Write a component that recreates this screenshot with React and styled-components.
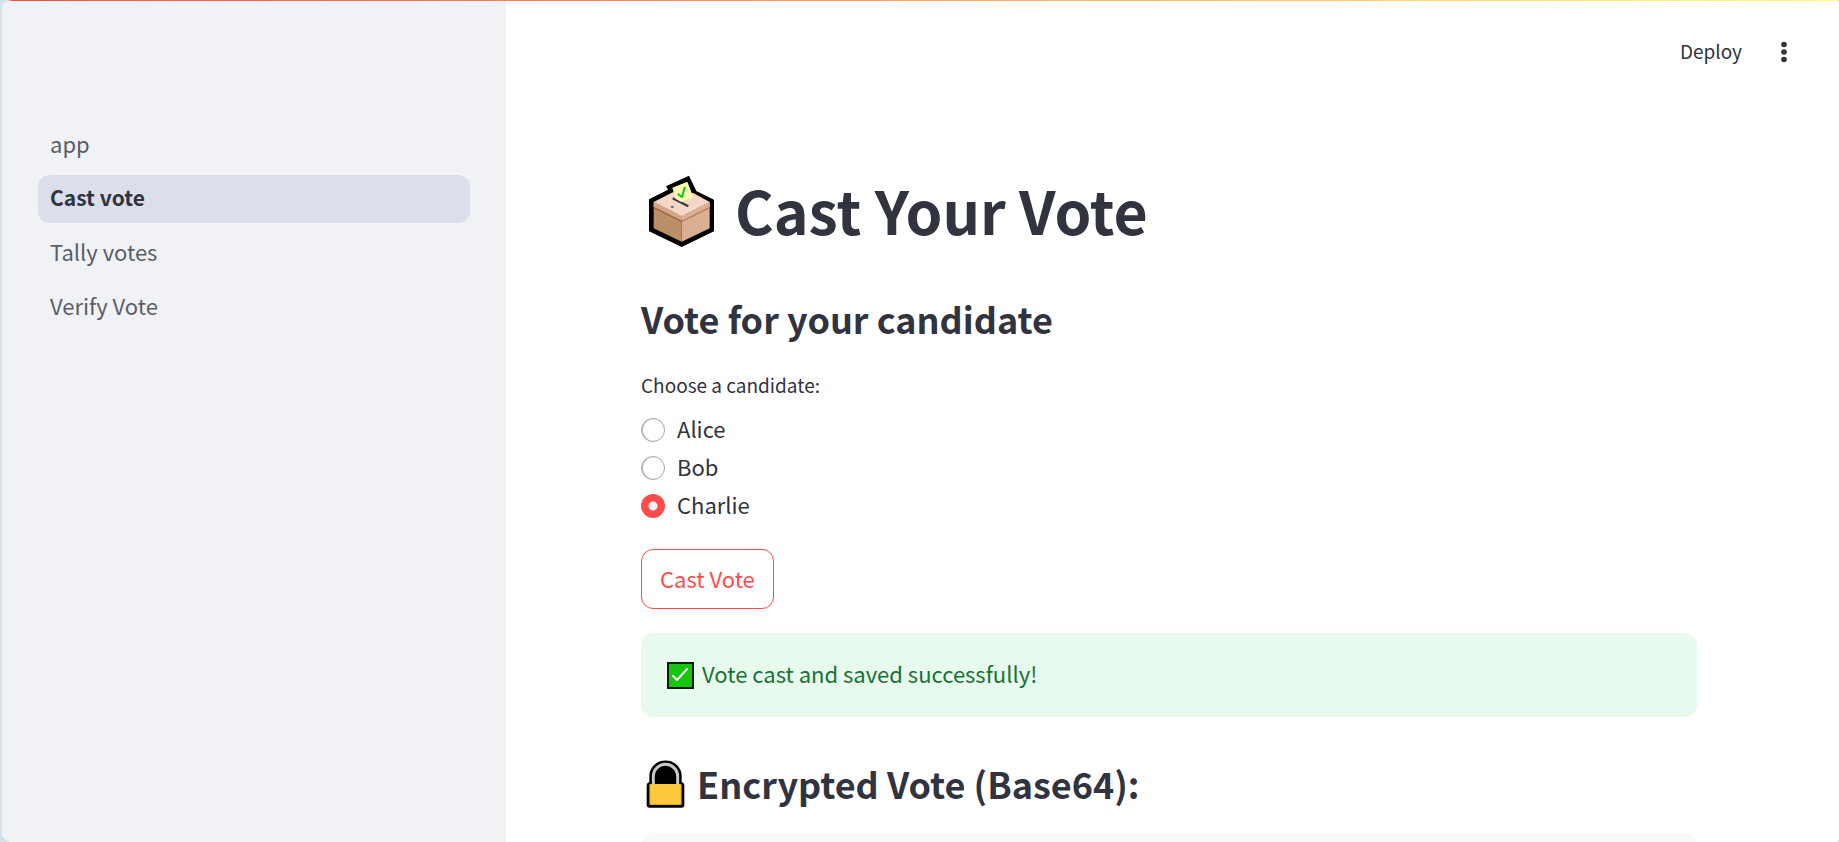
import React, { useState } from "react";
import styled, { createGlobalStyle } from "styled-components";

const GlobalStyle = createGlobalStyle`
  *, *::before, *::after { box-sizing: border-box; }
  body {
    margin: 0;
    background: #d5e1ea;
    color: #31333f;
    font-family: "Source Sans Pro", "Noto Sans CJK SC", "Noto Sans", sans-serif;
    font-size: 22px;
    line-height: 36px;
  }
  h1, h2, p { margin: 0; }
  button, input { font: inherit; color: inherit; }
`;

const Window = styled.div`
  display: flex;
  flex-direction: column;
  height: 100vh;
  margin-left: 2px;
  border-radius: 10px 4px 4px 10px;
  overflow: hidden;
  background: #fff;
`;

const Decoration = styled.div`
  flex: none;
  height: 1px;
  background: linear-gradient(90deg, #ff4b4b, #fffd80);
`;

const Body = styled.div`
  flex: 1;
  display: flex;
  min-height: 0;
`;

const Sidebar = styled.aside`
  flex: none;
  width: 504px;
  padding: 120px 36px 36px;
  background: #f0f2f6;
`;

const Nav = styled.nav`
  display: flex;
  flex-direction: column;
  gap: 6px;
`;

const NavLink = styled.a`
  padding: 4px 12px 8px;
  border-radius: 12px;
  text-decoration: none;
  color: ${(p) => (p.$active ? "#31333f" : "#5b5d68")};
  background: ${(p) => (p.$active ? "#dadfea" : "transparent")};
  font-size: ${(p) => (p.$active ? 21 : 22)}px;
  font-weight: ${(p) => (p.$active ? 600 : 400)};
`;

const Main = styled.main`
  flex: 1;
  min-width: 0;
  padding-right: 7px;
  overflow-y: auto;
  scrollbar-width: none;
`;

const Toolbar = styled.header`
  display: flex;
  justify-content: flex-end;
  align-items: center;
  gap: 24px;
  height: 102px;
  padding-right: 30px;
`;

const ToolButton = styled.button`
  display: flex;
  align-items: center;
  justify-content: center;
  padding: 0 0 2px;
  border: 0;
  background: none;
  font-size: 19px;
  line-height: 32px;
  cursor: pointer;
`;

const Content = styled.div`
  max-width: 1104px;
  margin: 0 auto;
  padding: 71px 24px 0;
`;

const Title = styled.h1`
  display: flex;
  align-items: flex-start;
  gap: 12px;
  height: 80px;
  font-size: 59px;
  font-weight: 700;
  line-height: 72px;
`;

const Heading = styled.h2`
  display: flex;
  align-items: flex-start;
  gap: 12px;
  height: 50px;
  margin-top: ${(p) => p.$top}px;
  font-size: 36px;
  font-weight: 600;
  line-height: 46px;
`;

const Choices = styled.fieldset`
  margin: 24px 0 0;
  padding: 0;
  border: 0;
`;

const Legend = styled.legend`
  padding: 0;
  margin-bottom: 11px;
  font-size: 19px;
  line-height: 32px;
`;

const Options = styled.div`
  display: flex;
  flex-direction: column;
  gap: 2px;
`;

const Option = styled.label`
  display: flex;
  align-items: center;
  gap: 12px;
  width: fit-content;
  cursor: pointer;
`;

const Text = styled.span`
  padding-bottom: 4px;
  line-height: 32px;
`;

const Radio = styled.input`
  appearance: none;
  width: 24px;
  height: 24px;
  margin: 0;
  border: 1px solid #a3a4a9;
  border-radius: 50%;
  box-shadow: inset 1px 0 0 #b4b5b9;
  &:checked {
    border: 0;
    box-shadow: none;
    background: radial-gradient(circle, #f0f2f6 4px, #ff4b4b 5px);
  }
`;

const CastButton = styled.button`
  display: block;
  margin-top: 25px;
  padding: 10px 18px 12px;
  border: 1px solid #ff4b4b;
  border-radius: 12px;
  background: #fff;
  color: #ff4b4b;
  cursor: pointer;
`;

const Alert = styled.div`
  display: flex;
  align-items: center;
  gap: 6px;
  margin-top: 24px;
  padding: 24px;
  border-radius: 12px;
  background: #e8f9ee;
  color: #177233;
`;

const CodeBlock = styled.pre`
  margin: 23px 0 0;
  height: 72px;
  border-radius: 12px;
  background: #f8f9fb;
`;

const BallotBox = () => (
  <svg width="82" height="80" viewBox="3 27 246 240" aria-hidden="true">
    <path d="M27 103 84 74 78 64 147 32 169 78 222 104V199L125 246 27 199Z" fill="#000" />
    <path d="M41 111 125 154V230L41 190Z" fill="#bc9066" />
    <path d="M209 111 125 154V230L209 190Z" fill="#d9b094" />
    <path d="M41 117 125 160V172L41 130Z" fill="#a0603a" />
    <path d="M209 117 125 160V172L209 130Z" fill="#b57c54" />
    <path d="M41 111 125 154V167L41 125Z" fill="#d3a685" />
    <path d="M209 111 125 154V167L209 125Z" fill="#dbb092" />
    <path d="M41 111 98 82 160 84 209 111 125 154Z" fill="#f6d6c5" />
    <path d="m98 100 47 24" stroke="#3b3d42" strokeWidth="7" />
    <path d="M97 68 142 50 160 97 124 111 107 101Z" fill="#fbfbb3" />
    <path d="m115 88 11 8 8-28" fill="none" stroke="#10c51c" strokeWidth="6" strokeLinecap="round" strokeLinejoin="round" />
    <ellipse cx="97" cy="126" rx="5" ry="3.500" fill="#74777c" />
  </svg>
);

const Padlock = () => (
  <svg width="44" height="50" viewBox="3 30 132 150" aria-hidden="true">
    <path d="M28 96V78a48 46 0 0 1 97 0v18q8 2 8 10v58q0 9-9 9H29q-9 0-9-9v-58q0-8 8-10Z" fill="#000" />
    <path d="M40 103V79a36.500 36 0 0 1 73 0v24" fill="none" stroke="#c9c9c9" strokeWidth="9" />
    <rect x="28" y="102" width="97" height="63" rx="4" fill="#e3a11b" />
    <rect x="31" y="102" width="91" height="60" rx="2" fill="#ffc83d" />
  </svg>
);

const CheckMark = () => (
  <svg width="31" height="28" viewBox="-1 0 31 28" aria-hidden="true">
    <rect x="2" y="2" width="25" height="25" fill="#16c60c" stroke="#061c08" strokeWidth="2" />
    <path d="m7 15 4 4 10-11" fill="none" stroke="#fff" strokeWidth="2" strokeLinecap="round" strokeLinejoin="round" />
  </svg>
);

const Dots = () => (
  <svg width="36" height="36" viewBox="0 0 36 36" fill="currentColor" aria-hidden="true">
    <circle cx="18" cy="11.500" r="2.800" />
    <circle cx="18" cy="19" r="2.800" />
    <circle cx="18" cy="26.500" r="2.800" />
  </svg>
);

const pages = ["app", "Cast vote", "Tally votes", "Verify Vote"];
const candidates = ["Alice", "Bob", "Charlie"];

export default function App() {
  const [choice, setChoice] = useState("Charlie");
  return (
    <>
      <GlobalStyle />
      <Window>
        <Decoration />
        <Body>
          <Sidebar>
            <Nav aria-label="Pages">
              {pages.map((page) => (
                <NavLink key={page} href="#" $active={page === "Cast vote"}>
                  {page}
                </NavLink>
              ))}
            </Nav>
          </Sidebar>
          <Main>
            <Toolbar>
              <ToolButton type="button">Deploy</ToolButton>
              <ToolButton type="button" aria-label="Main menu">
                <Dots />
              </ToolButton>
            </Toolbar>
            <Content>
              <Title>
                <BallotBox />
                Cast Your Vote
              </Title>
              <Heading $top={41}>Vote for your candidate</Heading>
              <Choices>
                <Legend>Choose a candidate:</Legend>
                <Options>
                  {candidates.map((name) => (
                    <Option key={name}>
                      <Radio
                        type="radio"
                        name="candidate"
                        checked={choice === name}
                        onChange={() => setChoice(name)}
                      />
                      <Text>{name}</Text>
                    </Option>
                  ))}
                </Options>
              </Choices>
              <CastButton type="button">Cast Vote</CastButton>
              <Alert role="status">
                <CheckMark />
                <Text as="p">Vote cast and saved successfully!</Text>
              </Alert>
              <Heading $top={43}>
                <Padlock />
                Encrypted Vote (Base64):
              </Heading>
              <CodeBlock />
            </Content>
          </Main>
        </Body>
      </Window>
    </>
  );
}
